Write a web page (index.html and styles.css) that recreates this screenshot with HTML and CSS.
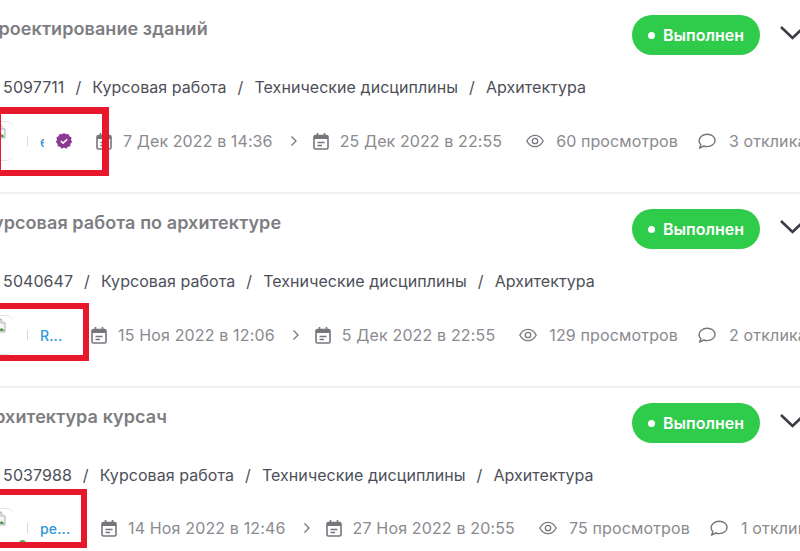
FILE: index.html
```html
<!DOCTYPE html>
<html lang="en">
<head>
    <meta charset="UTF-8">
    <title>Заказы</title>
    <link rel="stylesheet" href="styles.css">
</head>
<body>
    <svg class="sprite" width="0" height="0">
        <symbol id="cal" viewBox="0 0 16 18"><path d="M1 7V5a1.500 1.500 0 0 1 1.500-1.500h11A1.500 1.500 0 0 1 15 5v2z" fill="#75757c"/><path d="M2.500 3.500h11a1.500 1.500 0 0 1 1.500 1.500v10.500a1.500 1.500 0 0 1-1.500 1.500h-11A1.500 1.500 0 0 1 1 15.500V5a1.500 1.500 0 0 1 1.500-1.500zM4.500 1v4M11.500 1v4M4.500 10.500h7M4.500 13.500h4.500" fill="none" stroke="#75757c" stroke-width="1.600"/></symbol>
        <symbol id="eye" viewBox="0 0 18 14"><path d="M.8 7c2-3.800 4.800-5.700 8.200-5.700s6.200 1.900 8.200 5.700c-2 3.800-4.800 5.700-8.200 5.700S2.800 10.800.8 7z" fill="none" stroke="#75757c" stroke-width="1.300"/><circle cx="9" cy="7" r="2.700" fill="none" stroke="#75757c" stroke-width="1.300"/></symbol>
        <symbol id="msg" viewBox="0 0 18 16"><path d="M1.500 15.200l1.400-3.400C1.700 10.700 1 9.300 1 7.800 1 4.300 4.600 1.200 9.200 1.200s7.800 2.800 7.800 6.200-3.400 6.200-7.800 6.200c-1.200 0-2.300-.2-3.300-.6z" fill="none" stroke="#75757c" stroke-width="1.400" stroke-linejoin="round"/></symbol>
        <symbol id="broken" viewBox="0 0 16 16"><path d="M1 1h9l4 4v9H1z" fill="#f4f6f8" stroke="#a9aeb3"/><path d="M10 1v4h4" fill="#fff" stroke="#a9aeb3"/><path d="M2 3h7v6H2z" fill="#bcd0ea"/><path d="M2 13l4-5 3 3 2-1 2 2v1H2z" fill="#5f9c5a"/></symbol>
    </svg>

    <div class="list">
        <article class="order">
            <div class="head">
                <h2 class="title title-first">Проектирование зданий</h2>
                <span class="status"><i class="dot"></i>Выполнен</span>
                <svg class="chevron" width="28" height="16" viewBox="0 0 28 16"><path d="M2 2l11.500 11L25 2" fill="none" stroke="#3b3d48" stroke-width="2.600"/></svg>
            </div>
            <div class="path"><span>№ 5097711</span><b>/</b><span>Курсовая работа</span><b>/</b><span>Технические дисциплины</span><b>/</b><span>Архитектура</span></div>
            <div class="info info-first">
                <div class="owner owner-a">
                    <span class="avatar"><svg class="pic" width="16" height="16"><use href="#broken"/></svg></span>
                    <span class="sep"></span>
                    <span class="name name-cut">ерк</span>
                    <svg class="badge" width="18" height="18" viewBox="0 0 20 20"><path d="M10 1l2.300 1.500 2.700-.2 1 2.500 2.400 1.300-.6 2.700L19 11l-1.800 2-.2 2.700-2.700.6L12.500 18.500 10 17.300l-2.500 1.200-1.800-2.200-2.700-.6-.2-2.700L1 11l1.200-2.200-.6-2.700L4 4.800l1-2.500 2.700.2z" fill="#8b3a91"/><path d="M6.500 10l2.500 2.400 4.500-4.400" fill="none" stroke="#fff" stroke-width="1.700"/></svg>
                </div>
                <svg class="ico" width="16" height="18"><use href="#cal"/></svg>
                <span class="date">7 Дек 2022 в 14:36</span>
                <svg class="arrow" width="8" height="12" viewBox="0 0 8 12"><path d="M1.500 1.500L6 6l-4.500 4.500" fill="none" stroke="#75757c" stroke-width="1.300"/></svg>
                <svg class="ico" width="16" height="18"><use href="#cal"/></svg>
                <span class="date">25 Дек 2022 в 22:55</span>
                <svg class="ico eye" width="18" height="14"><use href="#eye"/></svg>
                <span class="date">60 просмотров</span>
                <svg class="ico msg" width="18" height="16"><use href="#msg"/></svg>
                <span class="date">3 отклика</span>
            </div>
            <div class="mark mark-a"></div>
        </article>

        <article class="order">
            <div class="head">
                <h2 class="title">Курсовая работа по архитектуре</h2>
                <span class="status"><i class="dot"></i>Выполнен</span>
                <svg class="chevron" width="28" height="16" viewBox="0 0 28 16"><path d="M2 2l11.500 11L25 2" fill="none" stroke="#3b3d48" stroke-width="2.600"/></svg>
            </div>
            <div class="path"><span>№ 5040647</span><b>/</b><span>Курсовая работа</span><b>/</b><span>Технические дисциплины</span><b>/</b><span>Архитектура</span></div>
            <div class="info">
                <div class="owner owner-b">
                    <span class="avatar"><svg class="pic" width="16" height="16"><use href="#broken"/></svg></span>
                    <span class="sep"></span>
                    <span class="name">R...</span>
                </div>
                <svg class="ico" width="16" height="18"><use href="#cal"/></svg>
                <span class="date">15 Ноя 2022 в 12:06</span>
                <svg class="arrow" width="8" height="12" viewBox="0 0 8 12"><path d="M1.500 1.500L6 6l-4.500 4.500" fill="none" stroke="#75757c" stroke-width="1.300"/></svg>
                <svg class="ico" width="16" height="18"><use href="#cal"/></svg>
                <span class="date">5 Дек 2022 в 22:55</span>
                <svg class="ico eye" width="18" height="14"><use href="#eye"/></svg>
                <span class="date">129 просмотров</span>
                <svg class="ico msg" width="18" height="16"><use href="#msg"/></svg>
                <span class="date">2 отклика</span>
            </div>
            <div class="mark mark-b"></div>
        </article>

        <article class="order">
            <div class="head">
                <h2 class="title">Архитектура курсач</h2>
                <span class="status"><i class="dot"></i>Выполнен</span>
                <svg class="chevron" width="28" height="16" viewBox="0 0 28 16"><path d="M2 2l11.500 11L25 2" fill="none" stroke="#3b3d48" stroke-width="2.600"/></svg>
            </div>
            <div class="path"><span>№ 5037988</span><b>/</b><span>Курсовая работа</span><b>/</b><span>Технические дисциплины</span><b>/</b><span>Архитектура</span></div>
            <div class="info info-low">
                <div class="owner owner-c">
                    <span class="avatar"><svg class="pic" width="16" height="16"><use href="#broken"/></svg><i class="online"></i></span>
                    <span class="sep"></span>
                    <span class="name">ре...</span>
                </div>
                <svg class="ico" width="16" height="18"><use href="#cal"/></svg>
                <span class="date">14 Ноя 2022 в 12:46</span>
                <svg class="arrow" width="8" height="12" viewBox="0 0 8 12"><path d="M1.500 1.500L6 6l-4.500 4.500" fill="none" stroke="#75757c" stroke-width="1.300"/></svg>
                <svg class="ico" width="16" height="18"><use href="#cal"/></svg>
                <span class="date">27 Ноя 2022 в 20:55</span>
                <svg class="ico eye" width="18" height="14"><use href="#eye"/></svg>
                <span class="date">75 просмотров</span>
                <svg class="ico msg" width="18" height="16"><use href="#msg"/></svg>
                <span class="date">1 отклик</span>
            </div>
            <div class="mark mark-c"></div>
        </article>
    </div>
</body>
</html>
```

FILE: styles.css
```css
html, body {
    margin: 0;
    padding: 0;
    height: 551px;
    overflow: hidden;
    background-color: #fff;
    font-family: 'Inter', sans-serif;
}
.sprite {
    position: absolute;
}
.list {
    width: 860px;
    margin-left: -30px;
}
.order {
    position: relative;
    box-sizing: border-box;
    height: 194px;
    padding: 15px 0 0 11px;
    border-bottom: 2px solid #f0f0f0;
}
.order:last-child {
    height: 163px;
    border-bottom: none;
}
.head {
    display: flex;
    align-items: flex-start;
    height: 40px;
}
.title {
    flex: 0 0 651px;
    margin: 4px 0 0;
    font-size: 18px;
    line-height: 20px;
    font-weight: 600;
    letter-spacing: 0.08px;
    color: #7d7d82;
}
.title-first {
    flex-basis: 647px;
    margin-left: 4px;
}
.status {
    display: flex;
    align-items: center;
    justify-content: center;
    width: 128px;
    height: 40px;
    border-radius: 20px;
    background-color: #2fcb4b;
    color: #fff;
    font-size: 16px;
    font-weight: 600;
}
.dot {
    width: 7px;
    height: 7px;
    margin-right: 8px;
    border-radius: 50%;
    background-color: #fff;
}
.chevron {
    flex: none;
    margin: 10px 0 0 19px;
}
.path {
    display: flex;
    align-items: center;
    height: 20px;
    margin-top: 22px;
    font-size: 16px;
    letter-spacing: 0.06px;
    color: #4d4f59;
    white-space: nowrap;
}
.path b {
    margin: 0 11px;
    font-weight: 400;
}
.info {
    display: flex;
    align-items: center;
    height: 40px;
    margin-top: 24px;
    font-size: 16px;
    letter-spacing: 0.15px;
    color: #8a8a8f;
    white-space: nowrap;
}
.info-first {
    letter-spacing: 0.1px;
}
.info-low {
    margin-top: 23px;
}
.owner {
    display: flex;
    align-items: center;
    flex: none;
}
.owner-a { width: 115px; }
.owner-b { width: 110px; }
.owner-c { width: 120px; }
.avatar {
    position: relative;
    flex: none;
    box-sizing: border-box;
    width: 40px;
    height: 40px;
    margin-left: -7px;
    border-radius: 8px;
    border-top: 1px solid #e4e4e4;
    border-bottom: 1px solid #e4e4e4;
}
.pic {
    position: absolute;
    top: 2px;
    left: 17px;
}
.online {
    position: absolute;
    right: -12px;
    bottom: 0;
    width: 7px;
    height: 7px;
    border-radius: 50%;
    background-color: #43b34a;
}
.sep {
    flex: none;
    width: 1px;
    height: 10px;
    margin-left: 13px;
    background-color: #d8d8d8;
}
.name {
    margin-left: 12px;
    font-size: 14px;
    font-weight: 500;
    color: #2f97dd;
}
.name-cut {
    flex: none;
    width: 4px;
    overflow: hidden;
}
.badge {
    flex: none;
    margin-left: 11px;
}
.ico {
    flex: none;
}
.date {
    margin-left: 11px;
}
.arrow {
    flex: none;
    margin: 0 15px 0 17px;
}
.eye {
    margin-left: 24px;
}
.eye + .date {
    margin-left: 12px;
}
.msg {
    margin-left: 20px;
}
.msg + .date {
    margin-left: 13px;
}
/* red marks drawn over the screenshot */
.mark {
    position: absolute;
    left: 24px;
    box-sizing: border-box;
    border: 6px solid #e8182c;
}
.mark-a { top: 107px; width: 115px; height: 69px; border-width: 7px 7px 6px; }
.mark-b { top: 109px; width: 95px; height: 58px; }
.mark-c { top: 101px; width: 93px; height: 59px; }
```
